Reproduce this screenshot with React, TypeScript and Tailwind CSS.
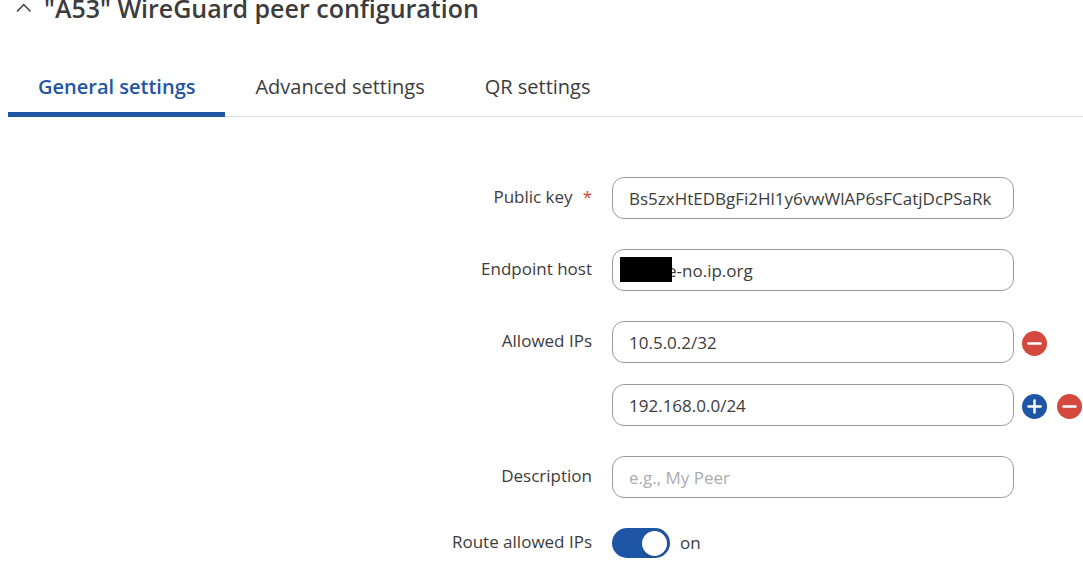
import React, { useState } from "react";

const inputClass =
  "block h-[42px] w-full rounded-xl border border-[#9a9aa6] bg-white px-4 text-[17px] leading-6 text-[#3c3c3c] outline-none placeholder:text-[#acacac] focus:border-[#1e56a5]";

interface RowProps {
  label: string;
  htmlFor: string;
  required?: boolean;
  children: React.ReactNode;
  actions?: React.ReactNode;
}

function Row({ label, htmlFor, required, children, actions }: RowProps) {
  return (
    <div className="flex items-center">
      <label htmlFor={htmlFor} className="min-w-0 flex-1 pr-5 pb-0.5 text-right">
        {label}
        {required && <span className="ml-2.5 text-[#d9413a]">*</span>}
      </label>
      <div className="relative w-[402px] shrink-0">{children}</div>
      <div className="flex w-[69px] shrink-0 gap-2.5 pt-0.5 pl-2">{actions}</div>
    </div>
  );
}

interface RoundButtonProps {
  kind: "add" | "remove";
  onClick: () => void;
}

function RoundButton({ kind, onClick }: RoundButtonProps) {
  return (
    <button
      type="button"
      aria-label={kind === "add" ? "Add" : "Remove"}
      onClick={onClick}
      className={`flex size-[25px] shrink-0 cursor-pointer items-center justify-center rounded-full ${
        kind === "add" ? "bg-[#1e56a5]" : "bg-[#d4483e]"
      }`}
    >
      <svg viewBox="0 0 25 25" className="size-[25px]" stroke="white" strokeWidth="2.5" strokeLinecap="round">
        <path d="M6.5 12.5h12" />
        {kind === "add" && <path d="M12.5 6.5v12" />}
      </svg>
    </button>
  );
}

const tabs = ["General settings", "Advanced settings", "QR settings"];

export default function App() {
  const [activeTab, setActiveTab] = useState(tabs[0]);
  const [ips, setIps] = useState(["10.5.0.2/32", "192.168.0.0/24"]);
  const [routeAllowed, setRouteAllowed] = useState(true);

  const removeIp = (index: number) => setIps(prev => prev.filter((_, i) => i !== index));

  return (
    <main className="bg-white font-['Open_Sans',sans-serif] text-[17px] leading-6 text-[#3c3c3c]">
      <header className="flex h-4 items-center gap-3 pl-4">
        <button type="button" aria-label="Collapse section" className="cursor-pointer">
          <svg viewBox="0 0 16 16" className="size-4" fill="none" stroke="#3c3c3c" strokeWidth="1.4">
            <path d="M1 11.5 7.75 4.5l6.75 7" />
          </svg>
        </button>
        <h1 className="text-[25px] leading-4 font-semibold">"A53" WireGuard peer configuration</h1>
      </header>

      <nav role="tablist" className="mt-10 ml-2 flex border-b border-[#e1e2e8]">
        {tabs.map(tab => (
          <button
            key={tab}
            type="button"
            role="tab"
            aria-selected={tab === activeTab}
            onClick={() => setActiveTab(tab)}
            className={`-mb-px h-[61px] cursor-pointer border-b-[5px] px-[30px] pt-[5px] text-[20px] ${
              tab === activeTab ? "border-[#1e56a5] font-semibold text-[#1e56a5]" : "border-transparent"
            }`}
          >
            {tab}
          </button>
        ))}
      </nav>

      <form className="mt-[60px] flex flex-col gap-[30px]" onSubmit={e => e.preventDefault()}>
        <Row label="Public key" htmlFor="public-key" required>
          <input id="public-key" className={inputClass} defaultValue="Bs5zxHtEDBgFi2Hl1y6vwWlAP6sFCatjDcPSaRk" />
        </Row>

        <Row label="Endpoint host" htmlFor="endpoint-host">
          <input id="endpoint-host" className={`${inputClass} pl-[54px]`} defaultValue="e-no.ip.org" />
          {/* Masked part of the host name */}
          <span className="absolute top-2 left-2 h-[25px] w-[52px] bg-black" />
        </Row>

        <div className="flex flex-col gap-[21px]">
          {ips.map((ip, index) => (
            <Row
              key={index}
              label={index === 0 ? "Allowed IPs" : ""}
              htmlFor={`allowed-ip-${index}`}
              actions={
                <>
                  {index > 0 && index === ips.length - 1 && (
                    <RoundButton kind="add" onClick={() => setIps(prev => [...prev, ""])} />
                  )}
                  <RoundButton kind="remove" onClick={() => removeIp(index)} />
                </>
              }
            >
              <input
                id={`allowed-ip-${index}`}
                aria-label={`Allowed IP ${index + 1}`}
                className={inputClass}
                value={ip}
                onChange={e => setIps(prev => prev.map((v, i) => (i === index ? e.target.value : v)))}
              />
            </Row>
          ))}
        </div>

        <Row label="Description" htmlFor="description">
          <input id="description" className={inputClass} placeholder="e.g., My Peer" />
        </Row>

        <Row label="Route allowed IPs" htmlFor="route-allowed">
          <div className="flex items-center gap-2.5">
            <span className="relative h-[30px] w-[58px]">
              <input
                id="route-allowed"
                type="checkbox"
                role="switch"
                checked={routeAllowed}
                onChange={e => setRouteAllowed(e.target.checked)}
                className="peer block h-[30px] w-[58px] cursor-pointer appearance-none rounded-full bg-[#a9abb5] checked:bg-[#1e56a5]"
              />
              <span className="pointer-events-none absolute top-[3px] left-[3px] size-[25px] rounded-full bg-white shadow-md peer-checked:left-[30px]" />
            </span>
            <span>{routeAllowed ? "on" : "off"}</span>
          </div>
        </Row>
      </form>
    </main>
  );
}
